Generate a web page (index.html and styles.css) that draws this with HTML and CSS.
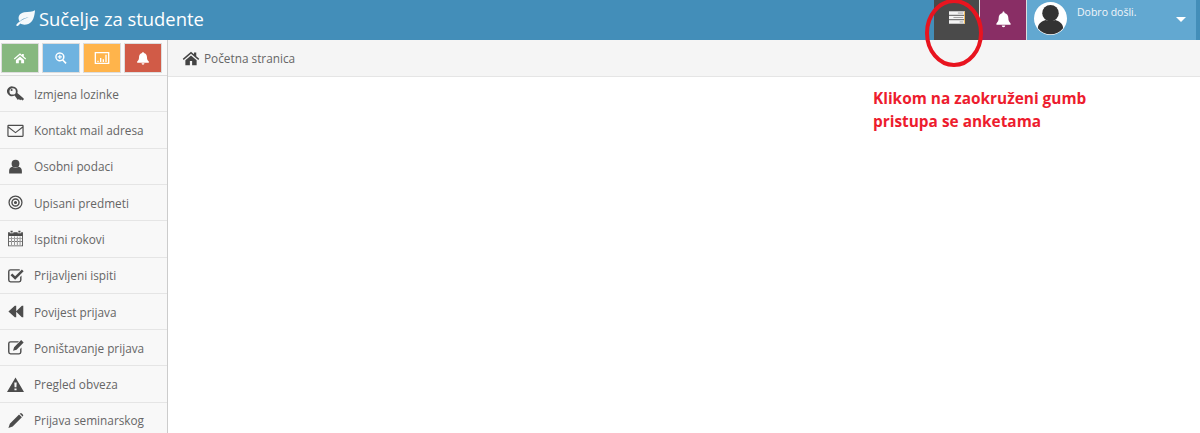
FILE: index.html
```html
<!DOCTYPE html>
<html lang="hr">
<head>
  <meta charset="UTF-8" />
  <title>Sučelje za studente</title>
  <link rel="stylesheet" href="styles.css">
</head>
<body>
  <header class="navbar">
    <a class="brand">
      <svg class="leaf" viewBox="0 0 24 20"><path d="M24 0c-.5 7-2 14-8 16.500-4 1.500-7.500 1-9.500-.5-1.200 1-2.500 3-3.500 3-1.200 0-2-1-1-2.200 1-1 2.500-2.300 5.500-4.300 3-2 6-3 9-4-4 .3-8 2-11 5C2.500 8 5.500 3.500 11 2.500 16 1.700 21 2 24 0z"/></svg>
      <span>Sučelje za studente</span>
    </a>
    <div class="nav-right">
      <div class="nav-btn dark">
        <svg class="tasks" viewBox="0 0 18 14">
          <rect width="18" height="4" fill="#f4f4f4"/><rect y="5" width="18" height="4" fill="#f4f4f4"/><rect y="10" width="18" height="4" fill="#f4f4f4"/>
          <rect x="10" y="1.500" width="6" height="1" fill="#999"/><rect x="5" y="6.500" width="11" height="1" fill="#999"/><rect x="12" y="11.500" width="4" height="1" fill="#999"/>
          <rect x="17" width="1" height="14" fill="#f2b84b"/>
        </svg>
      </div>
      <div class="nav-btn purple">
        <svg class="bell" viewBox="0 0 24 24"><path d="M12 1.500c.8 0 1.400.6 1.400 1.400v.5c3.600.7 5.400 3.600 5.400 7 0 4.600 1.400 6 3.200 7.800V20H2v-1.800C3.800 16.400 5.200 15 5.200 10.400c0-3.400 1.800-6.300 5.400-7v-.5c0-.8.600-1.400 1.400-1.400zM9.500 21h5a2.500 2.500 0 0 1-5 0z"/></svg>
      </div>
      <div class="user">
        <svg class="avatar" viewBox="0 0 34 34">
          <circle cx="17" cy="17" r="17" fill="#fff"/>
          <circle cx="17" cy="11.500" r="8.500" fill="#333"/>
          <path d="M4 27c0-5 4.500-7.500 8-8.500 3 1.500 7 1.500 10 0 3.500 1 8 3.500 8 8.500a16.500 16.500 0 0 1-26 0z" fill="#333"/>
        </svg>
        <span class="welcome">Dobro došli.</span>
        <span class="caret"></span>
      </div>
    </div>
  </header>

  <div class="layout">
    <aside class="sidebar">
      <div class="shortcuts">
        <a class="shortcut green"><svg viewBox="0 0 24 24"><path d="M12 4 1.500 13l1.300 1.500L12 6.700l9.200 7.800 1.300-1.500L18.500 9.600V5h-3v2zM5 15.500V21h5v-5h4v5h5v-5.500L12 9.500z"/></svg></a>
        <a class="shortcut blue"><svg viewBox="0 0 24 24"><path fill-rule="evenodd" d="M10 2a8 8 0 0 1 6.400 12.800l5.300 5.300-2 2-5.300-5.300A8 8 0 1 1 10 2zm0 2.500a5.500 5.500 0 1 0 0 11 5.500 5.500 0 0 0 0-11zM9 6.500h2V9h2.500v2H11v2.500H9V11H6.500V9H9z"/></svg></a>
        <a class="shortcut orange"><svg class="wide" viewBox="0 0 24 24"><path fill-rule="evenodd" d="M1 3h22v18H1zm2 2v14h18V5zm2 11h2v2H5zm4-4h2v6H9zm4 2h2v4h-2zm4-7h2v11h-2z"/></svg></a>
        <a class="shortcut red"><svg viewBox="0 0 24 24"><path d="M12 1.500c.8 0 1.400.6 1.400 1.400v.5c3.600.7 5.400 3.600 5.400 7 0 4.600 1.400 6 3.200 7.800V20H2v-1.800C3.800 16.400 5.200 15 5.200 10.400c0-3.400 1.800-6.300 5.400-7v-.5c0-.8.600-1.400 1.400-1.400zM9.500 21h5a2.500 2.500 0 0 1-5 0z"/></svg></a>
      </div>
      <ul class="menu">
        <li><svg viewBox="0 0 24 24"><path fill-rule="evenodd" d="M8 2a7 7 0 0 1 6.600 9.300l9 7.700v1.500L22 22l-2-1.700-1.500 1.400-1.700-1.900-1.500 1.300-4.600-6.300A7 7 0 1 1 8 2zm0 2.500a4.500 4.500 0 1 0 0 9 4.500 4.500 0 0 0 0-9z"/><circle cx="6.500" cy="7" r="1.500"/></svg><span>Izmjena lozinke</span></li>
        <li><svg viewBox="0 0 24 24"><path fill-rule="evenodd" d="M2 4h20a1.500 1.500 0 0 1 1.500 1.500v14A1.500 1.500 0 0 1 22 21H2a1.500 1.500 0 0 1-1.500-1.500v-14A1.500 1.500 0 0 1 2 4zm.2 1.500v.8L12 14l9.800-7.700v-.8zm19.600 2.800L12 16 2.200 8.300v11h19.600z"/></svg><span>Kontakt mail adresa</span></li>
        <li><svg viewBox="0 0 24 24"><circle cx="12" cy="8" r="5.500"/><path d="M3 22v-4c0-3 2-5 4.500-5.500 2.500 2 6.500 2 9 0C19 13 21 15 21 18v4z"/></svg><span>Osobni podaci</span></li>
        <li><svg viewBox="0 0 24 24"><path fill-rule="evenodd" d="M12 2a10 10 0 1 1 0 20 10 10 0 0 1 0-20zm0 1.800a8.200 8.200 0 1 0 0 16.400 8.200 8.200 0 0 0 0-16.400zm0 2.200a6 6 0 1 1 0 12 6 6 0 0 1 0-12zm0 2a4 4 0 1 0 0 8 4 4 0 0 0 0-8zm0 1.800a2.200 2.200 0 1 1 0 4.400 2.200 2.200 0 0 1 0-4.400z"/></svg><span>Upisani predmeti</span></li>
        <li><svg viewBox="0 0 24 24"><path fill-rule="evenodd" d="M5 1h3v2.500H5zm11 0h3v2.500h-3zM1.500 3H4v1.500h5V3h6v1.500h5V3h2.500v20h-21zm1.200 5.500v13.300h18.600V8.500zm3 .5h.8v12h-.8zm4.300 0h.8v12H10zm4 0h.8v12H14zm4 0h.8v12H18zM3 12h18v.8H3zm0 4h18v.8H3z"/></svg><span>Ispitni rokovi</span></li>
        <li><svg viewBox="0 0 24 24"><path fill-rule="evenodd" d="M5 3h13v2H5a1.500 1.500 0 0 0-1.500 1.500v12A1.500 1.500 0 0 0 5 20h12a1.500 1.500 0 0 0 1.500-1.500V14l2-2v6.500A3.500 3.500 0 0 1 17 22H5a3.500 3.500 0 0 1-3.500-3.500v-12A3.500 3.500 0 0 1 5 3zm16 .5 2.500 2.500-12 12L5 11.500 7.500 9l4 4z"/></svg><span>Prijavljeni ispiti</span></li>
        <li><svg viewBox="0 0 24 24"><path d="M13 4v7.500L21 4h2v16h-2l-8-7.500V20h-2L2 12l9-8z"/></svg><span>Povijest prijava</span></li>
        <li><svg viewBox="0 0 24 24"><path fill-rule="evenodd" d="M5 3h12l-2 2H5a1.500 1.500 0 0 0-1.500 1.500v12A1.500 1.500 0 0 0 5 20h12a1.500 1.500 0 0 0 1.500-1.500V14l2-2v6.500A3.500 3.500 0 0 1 17 22H5a3.500 3.500 0 0 1-3.500-3.500v-12A3.500 3.500 0 0 1 5 3zm15-1.500L23.500 5l-10 10-5 1.500 1.500-5z"/></svg><span>Poništavanje prijava</span></li>
        <li><svg viewBox="0 0 24 24"><path fill-rule="evenodd" d="M12 2 24 22.500H0zM10.300 9l.4 7h2.600l.4-7zm.2 8.500v2.500h3v-2.500z"/></svg><span>Pregled obveza</span></li>
        <li><svg viewBox="0 0 24 24"><path d="M17 3.500 21 7.500 8 20.500l-6 2 2-6zM18.300 2.200c.8-.8 2-.8 2.700 0l1.300 1.300c.8.800.8 2 0 2.700L22 6.500 18 2.500z"/></svg><span>Prijava seminarskog</span></li>
      </ul>
    </aside>
    <main class="content">
      <div class="breadcrumb">
        <svg viewBox="0 0 24 24"><path d="M12 3.500 1 13l1.300 1.500L12 6.200l9.700 8.300L23 13l-4-3.500V4.500h-3V7zM4.500 15v6.500h6V16h3v5.500h6V15L12 8.500z"/></svg>
        <span>Početna stranica</span>
      </div>
      <p class="note">Klikom na zaokruženi gumb<br>pristupa se anketama</p>
    </main>
  </div>

  <svg class="circle-mark" viewBox="0 0 64 74"><ellipse cx="32" cy="35" rx="27" ry="32"/></svg>
</body>
</html>
```

FILE: styles.css
```css
html, body {
  height: 100%;
}

body {
  margin: 0;
  font-family: 'Open Sans', sans-serif;
  font-size: 12px;
  color: #666;
  background: #fff;
  overflow: hidden;
}

.navbar {
  height: 40px;
  background: #438eb9;
  display: flex;
  justify-content: space-between;
  color: #fff;
}

.brand {
  display: flex;
  align-items: center;
  gap: 4px;
  padding: 0 0 3px 15px;
  font-size: 18.4px;
}

.leaf {
  width: 20px;
  height: 17px;
  fill: #f4f8fb;
}

.nav-right {
  display: flex;
  padding-right: 4px;
  background: #438eb9;
}

.nav-btn {
  display: flex;
  align-items: center;
  justify-content: center;
  padding-bottom: 3px;
  box-sizing: border-box;
}

.nav-btn.dark {
  width: 45px;
  background: #4a4a4a;
}

.nav-btn.purple {
  width: 47px;
  background: #892e65;
  border-left: 1px solid #ddd;
}

.tasks {
  width: 16px;
  height: 13px;
  margin-bottom: 2px;
}

.bell {
  width: 17px;
  height: 18px;
  fill: #fff;
}

.user {
  width: 170px;
  box-sizing: border-box;
  background: #62a8d1;
  border-left: 1px solid #ddd;
  position: relative;
  display: flex;
  padding: 2px 0 0 7px;
  gap: 10px;
}

.avatar {
  width: 33px;
  height: 33px;
}

.welcome {
  font-size: 10.5px;
  padding-top: 3px;
  color: #f2f6fa;
}

.caret {
  position: absolute;
  right: 10px;
  top: 17px;
  border-left: 5px solid transparent;
  border-right: 5px solid transparent;
  border-top: 5px solid #fff;
}

.layout {
  display: flex;
  height: 393px;
}

.sidebar {
  width: 168px;
  flex: none;
  box-sizing: border-box;
  background: #f9f9f9;
  border-right: 1px solid #ccc;
}

.shortcuts {
  height: 36.1px;
  box-sizing: border-box;
  padding: 3px 0 0 1px;
  display: flex;
  gap: 3px;
  border-bottom: 1px solid #ddd;
  background: #fafafa;
}

.shortcut {
  width: 38px;
  height: 30px;
  box-sizing: border-box;
  border: 1px solid #ddd;
  display: flex;
  align-items: center;
  justify-content: center;
}

.shortcut svg {
  width: 14px;
  height: 14px;
  fill: #fff;
}

.shortcut svg.wide {
  width: 16px;
  height: 16px;
}

.shortcut.green { background: #87b87f; }
.shortcut.blue { background: #6fb3e0; }
.shortcut.orange { background: #ffb44b; }
.shortcut.red { background: #d15b47; }

.menu {
  margin: 0;
  padding: 0;
  list-style: none;
}

.menu li {
  height: 36.3px;
  box-sizing: border-box;
  border-bottom: 1px solid #e5e5e5;
  background: #f8f8f8;
  display: flex;
  align-items: center;
  padding-left: 7px;
  font-size: 11.8px;
}

.menu svg {
  width: 17px;
  height: 17px;
  fill: #4c4c4c;
  flex: none;
  margin-right: 10px;
}

.content {
  flex: 1;
}

.breadcrumb {
  height: 37px;
  box-sizing: border-box;
  background: #f5f5f5;
  border-bottom: 1px solid #e5e5e5;
  display: flex;
  align-items: center;
  gap: 4px;
  padding-left: 14px;
  font-size: 11.8px;
}

.breadcrumb svg {
  width: 18px;
  height: 18px;
  fill: #444;
}

.note {
  margin: 10px 0 0 705px;
  font-size: 15.4px;
  font-weight: 700;
  line-height: 23px;
  color: #ed1c2e;
}

.circle-mark {
  position: absolute;
  left: 922px;
  top: -2px;
  width: 64px;
  height: 74px;
  fill: none;
  stroke: #e8141f;
  stroke-width: 4;
}
```
